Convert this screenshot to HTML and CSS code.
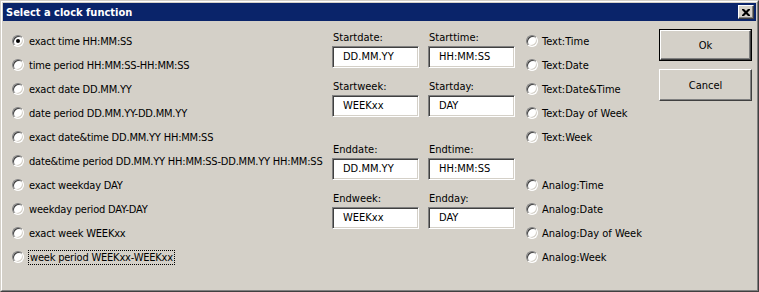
FILE: index.html
```html
<!doctype html>
<html lang="en">

<head>
	<meta charset="UTF-8">
	<title>Select a clock function</title>
	<link rel="stylesheet" href="styles.css">
</head>

<body>
	<div class="window">
		<div class="frame">
			<div class="titlebar">
				<span class="title">Select a clock function</span>
				<span class="close">
					<svg width="8" height="7" viewBox="0 0 8 7">
						<path d="M0 0h2l2 2 2-2h2v1l-2.5 2.5 2.5 2.5v1h-2l-2-2-2 2h-2v-1l2.5-2.5-2.5-2.5z" fill="#000" />
					</svg>
				</span>
			</div>

			<div class="content">
				<div class="modes">
					<label class="opt"><span class="radio checked"></span>exact time HH:MM:SS</label>
					<label class="opt"><span class="radio"></span>time period HH:MM:SS-HH:MM:SS</label>
					<label class="opt"><span class="radio"></span>exact date DD.MM.YY</label>
					<label class="opt"><span class="radio"></span>date period DD.MM.YY-DD.MM.YY</label>
					<label class="opt"><span class="radio"></span>exact date&amp;time DD.MM.YY HH:MM:SS</label>
					<label class="opt"><span class="radio"></span>date&amp;time period DD.MM.YY HH:MM:SS-DD.MM.YY HH:MM:SS</label>
					<label class="opt"><span class="radio"></span>exact weekday DAY</label>
					<label class="opt"><span class="radio"></span>weekday period DAY-DAY</label>
					<label class="opt"><span class="radio"></span>exact week WEEKxx</label>
					<label class="opt"><span class="radio"></span><span class="focus">week period WEEKxx-WEEKxx</span></label>
				</div>

				<div class="fields">
					<div class="field"><span class="lbl">Startdate:</span><span class="box">DD.MM.YY</span></div>
					<div class="field"><span class="lbl">Starttime:</span><span class="box">HH:MM:SS</span></div>
					<div class="field"><span class="lbl">Startweek:</span><span class="box">WEEKxx</span></div>
					<div class="field"><span class="lbl">Startday:</span><span class="box">DAY</span></div>
					<div class="field end"><span class="lbl">Enddate:</span><span class="box">DD.MM.YY</span></div>
					<div class="field end"><span class="lbl">Endtime:</span><span class="box">HH:MM:SS</span></div>
					<div class="field"><span class="lbl">Endweek:</span><span class="box">WEEKxx</span></div>
					<div class="field"><span class="lbl">Endday:</span><span class="box">DAY</span></div>
				</div>

				<div class="kinds">
					<label class="opt"><span class="radio"></span>Text:Time</label>
					<label class="opt"><span class="radio"></span>Text:Date</label>
					<label class="opt"><span class="radio"></span>Text:Date&amp;Time</label>
					<label class="opt"><span class="radio"></span>Text:Day of Week</label>
					<label class="opt"><span class="radio"></span>Text:Week</label>
					<div class="spacer"></div>
					<label class="opt"><span class="radio"></span>Analog:Time</label>
					<label class="opt"><span class="radio"></span>Analog:Date</label>
					<label class="opt"><span class="radio"></span>Analog:Day of Week</label>
					<label class="opt"><span class="radio"></span>Analog:Week</label>
				</div>

				<div class="actions">
					<span class="btn default"><span class="face">Ok</span></span>
					<span class="btn"><span class="face">Cancel</span></span>
				</div>
			</div>
		</div>
	</div>
</body>

</html>
```

FILE: styles.css
```css
html,
body {
	margin: 0;
	padding: 0;
	background: #d4d0c8;
}

body {
	font: 11px "DejaVu Sans Condensed", "DejaVu Sans", sans-serif;
	color: #000;
}

.window {
	width: 759px;
	height: 292px;
	box-sizing: border-box;
	border: 1px solid;
	border-color: #d4d0c8 #404040 #404040 #d4d0c8;
}

.frame {
	height: 100%;
	box-sizing: border-box;
	border: 1px solid;
	border-color: #fff #808080 #808080 #fff;
	padding: 1px;
	display: flex;
	flex-direction: column;
}

.titlebar {
	height: 18px;
	background: #0a246a;
	display: flex;
	align-items: center;
	justify-content: space-between;
	padding: 0 2px 0 3px;
}

.title {
	color: #fff;
	font-weight: bold;
}

.close {
	width: 16px;
	height: 14px;
	box-sizing: border-box;
	background: #d4d0c8;
	border: 1px solid;
	border-color: #fff #404040 #404040 #fff;
	box-shadow: inset -1px -1px 0 #808080;
	display: flex;
	align-items: center;
	justify-content: center;
}

.content {
	flex: 1;
	display: flex;
	padding: 8px 0 0 9px;
}

.modes {
	width: 320px;
	display: flex;
	flex-direction: column;
	letter-spacing: -0.2px;
}

.opt {
	height: 24px;
	display: flex;
	align-items: center;
	gap: 5px;
	white-space: nowrap;
}

.radio {
	width: 12px;
	height: 12px;
	box-sizing: border-box;
	border-radius: 50%;
	border: 1px solid;
	border-color: #808080 #fff #fff #808080;
	background: #fff;
	box-shadow: inset 1px 1px 0 #404040, inset -1px -1px 0 #d4d0c8;
	display: flex;
	align-items: center;
	justify-content: center;
	flex: none;
}

.radio.checked::after {
	content: "";
	width: 4px;
	height: 4px;
	border-radius: 50%;
	background: #000;
}

.focus {
	outline: 1px dotted #000;
	outline-offset: 0;
	padding: 0 1px;
}

.fields {
	width: 194px;
	display: grid;
	grid-template-columns: 96px 96px;
	align-content: start;
	row-gap: 12px;
	padding-top: 2px;
}

.field {
	display: flex;
	flex-direction: column;
	gap: 2px;
}

.field.end {
	margin-top: 14px;
}

.lbl {
	line-height: 13px;
	padding-left: 1px;
}

.box {
	width: 87px;
	height: 22px;
	box-sizing: border-box;
	background: #fff;
	border: 1px solid;
	border-color: #808080 #fff #fff #808080;
	box-shadow: inset 1px 1px 0 #404040, inset -1px -1px 0 #d4d0c8;
	padding-left: 10px;
	line-height: 20px;
}

.kinds {
	width: 133px;
	display: flex;
	flex-direction: column;
}

.kinds .opt {
	gap: 4px;
}

.spacer {
	height: 24px;
}

.actions {
	display: flex;
	flex-direction: column;
	gap: 8px;
}

.btn {
	width: 93px;
	height: 32px;
	box-sizing: border-box;
	border: 1px solid;
	border-color: #fff #404040 #404040 #fff;
	display: flex;
}

.btn .face {
	flex: 1;
	box-shadow: inset -1px -1px 0 #808080;
	display: flex;
	align-items: center;
	justify-content: center;
}

.btn.default {
	border: 1px solid #000;
}

.btn.default .face {
	border: 1px solid;
	border-color: #fff #404040 #404040 #fff;
}
```
